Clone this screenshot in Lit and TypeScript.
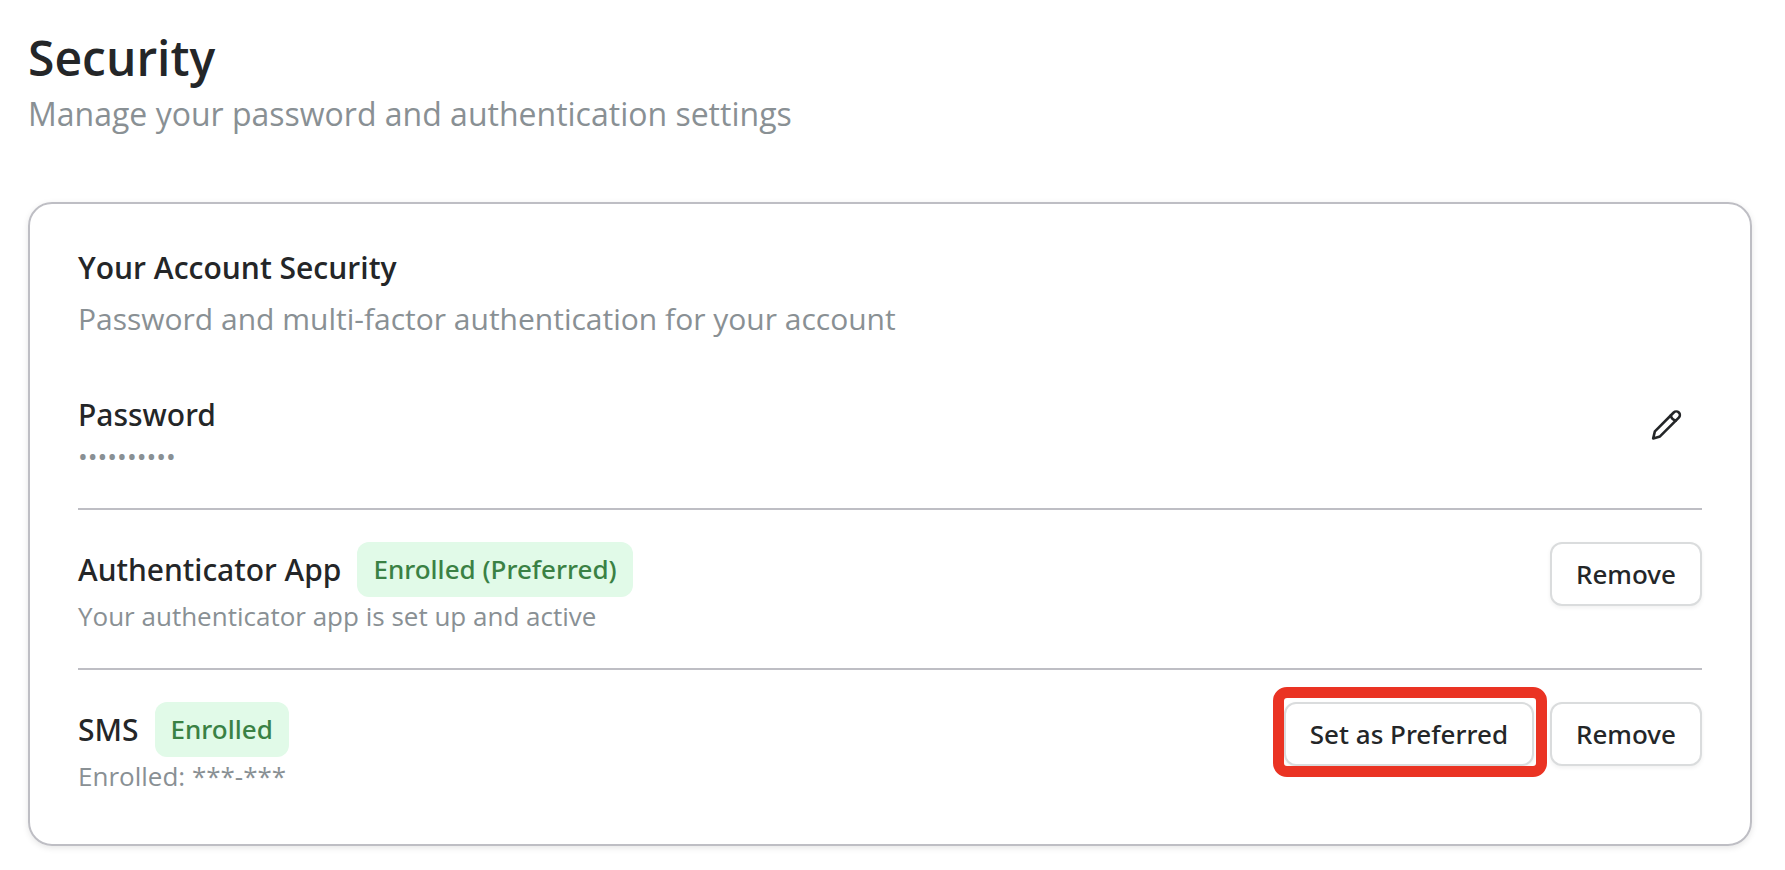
import { LitElement, html, css, nothing } from "lit";
import { customElement } from "lit/decorators.js";

interface Factor {
  name: string;
  status: string;
  detail: string;
  canPrefer: boolean;
}

const FACTORS: Factor[] = [
  {
    name: "Authenticator App",
    status: "Enrolled (Preferred)",
    detail: "Your authenticator app is set up and active",
    canPrefer: false,
  },
  { name: "SMS", status: "Enrolled", detail: "Enrolled: ***-***", canPrefer: true },
];

@customElement("app-root")
export class AppRoot extends LitElement {
  static styles = css`
    :host {
      display: block;
      box-sizing: border-box;
      padding: 26px 33px 24px 28px;
      background: #fff;
      color: #242628;
      font-family: "Open Sans", "Noto Sans", sans-serif;
      font-size: 26px;
      line-height: 39px;
    }
    h1,
    h2,
    h3,
    p {
      margin: 0;
    }
    .page-title {
      font-size: 48px;
      line-height: 64px;
      font-weight: 600;
    }
    .page-subtitle {
      font-size: 32px;
      line-height: 48px;
      color: #899094;
    }
    .card {
      margin-top: 64px;
      padding: 48px;
      border: 2px solid #bebec4;
      border-radius: 24px;
      box-shadow: 0 2px 6px rgba(0, 0, 0, 0.1);
    }
    .card-title {
      font-size: 30px;
      line-height: 32px;
      font-weight: 600;
    }
    .card-subtitle {
      margin-top: 12px;
      font-size: 30px;
      line-height: 45px;
      color: #899094;
    }
    .rows {
      margin-top: 51px;
    }
    .row {
      display: flex;
      justify-content: space-between;
      align-items: flex-start;
      gap: 32px;
    }
    .row + .row {
      margin-top: 32px;
      padding-top: 32px;
      border-top: 2px solid #bebec4;
    }
    .heading {
      display: flex;
      align-items: center;
      gap: 16px;
    }
    .name,
    .badge,
    button {
      font-family: "Noto Sans", "Open Sans", sans-serif;
      font-weight: 500;
    }
    .name {
      font-size: 30px;
      line-height: 45px;
    }
    .badge {
      padding: 8px 16px;
      border-radius: 12px;
      background: #e1fae8;
      color: #3a8144;
    }
    .detail {
      color: #899094;
    }
    .actions {
      display: flex;
      flex: none;
      gap: 16px;
    }
    button {
      box-sizing: border-box;
      height: 64px;
      padding: 0 24px;
      border: 2px solid #dadcdd;
      border-radius: 12px;
      background: #fff;
      color: inherit;
      font-size: 26px;
      line-height: 39px;
      box-shadow: 0 2px 4px rgba(0, 0, 0, 0.06);
      cursor: pointer;
    }
    .edit {
      display: grid;
      place-items: center;
      width: 72px;
      padding: 0;
      border-color: transparent;
      box-shadow: none;
    }
    .edit svg {
      display: block;
      width: 32px;
      height: 32px;
    }
    .highlight {
      position: relative;
      display: flex;
    }
    .highlight::after {
      content: "";
      position: absolute;
      inset: -15px -13px -11px -11px;
      border: 11px solid #ea3323;
      border-radius: 14px;
      pointer-events: none;
    }
  `;

  private renderFactor(factor: Factor) {
    return html`
      <section class="row">
        <div>
          <div class="heading">
            <h3 class="name">${factor.name}</h3>
            <span class="badge">${factor.status}</span>
          </div>
          <p class="detail">${factor.detail}</p>
        </div>
        <div class="actions">
          ${factor.canPrefer
            ? html`<div class="highlight"><button type="button">Set as Preferred</button></div>`
            : nothing}
          <button type="button">Remove</button>
        </div>
      </section>
    `;
  }

  render() {
    return html`
      <header>
        <h1 class="page-title">Security</h1>
        <p class="page-subtitle">Manage your password and authentication settings</p>
      </header>
      <main class="card">
        <h2 class="card-title">Your Account Security</h2>
        <p class="card-subtitle">Password and multi-factor authentication for your account</p>
        <div class="rows">
          <section class="row">
            <div>
              <h3 class="name">Password</h3>
              <p class="detail">••••••••••</p>
            </div>
            <div class="actions">
              <button type="button" class="edit" aria-label="Edit password">
                <svg
                  viewBox="0 0 32 32"
                  fill="none"
                  stroke="currentColor"
                  stroke-width="2.6"
                  stroke-linecap="round"
                  stroke-linejoin="round"
                  aria-hidden="true"
                >
                  <path
                    d="M23.7 4.5a3.6 3.6 0 0 1 5.1 5.1L10 28.4L3.2 30.4L4.9 23.3z"
                  />
                  <path d="M20.8 7.4a6.5 6.5 0 0 0 5.1 5.1" />
                </svg>
              </button>
            </div>
          </section>
          ${FACTORS.map((factor) => this.renderFactor(factor))}
        </div>
      </main>
    `;
  }
}
